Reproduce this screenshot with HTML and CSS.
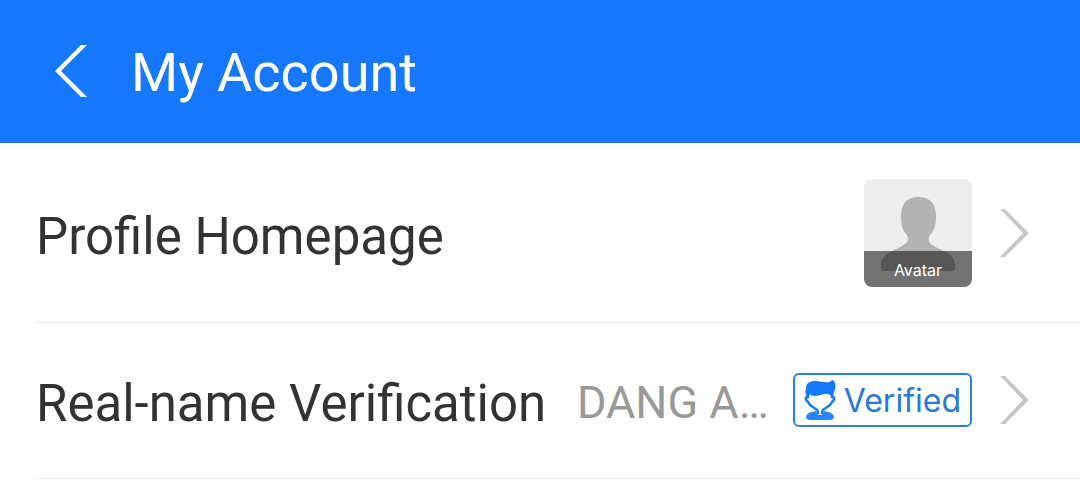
FILE: index.html
```html
<!DOCTYPE html>
<html lang="en">
<head>
    <meta charset="UTF-8">
    <meta name="viewport" content="width=device-width, initial-scale=1.0">
    <title>My Account</title>
    <link rel="stylesheet" href="styles.css">
</head>
<body>
    <header class="header">
        <button type="button" class="back" aria-label="Back">
            <svg width="34" height="52" viewBox="0 0 34 52">
                <path d="M26 0 0 26 26 52H32L6 26 32 0Z" fill="currentColor"/>
            </svg>
        </button>
        <h1>My Account</h1>
    </header>

    <main class="list">
        <a href="#profile" class="row row-profile">
            <span class="label">Profile Homepage</span>
            <span class="avatar">
                <svg width="108" height="108" viewBox="0 0 108 108" aria-hidden="true">
                    <path d="M54 18C66 18 72 25 72 37C72 45 71 50 67 55C64 59 64 62 67 65C69 67 74 69 80 72C88 76 91 80 91 87C91 91 90 92 87 92H21C18 92 17 91 17 87C17 80 20 76 28 72C34 69 39 67 41 65C45 62 45 59 42 55C38 50 37 45 37 37C37 25 43 18 54 18Z" fill="#b3b3b3"/>
                </svg>
                <span class="avatar-caption">Avatar</span>
            </span>
            <svg class="chevron" width="29" height="48" viewBox="0 0 29 48" aria-hidden="true">
                <path d="M0 0H5L29 24 5 48H0L23 24Z" fill="currentColor"/>
            </svg>
        </a>

        <a href="#verification" class="row row-verification">
            <span class="label">Real-name Verification</span>
            <span class="value">DANG A…</span>
            <span class="badge">
                <svg width="32" height="42" viewBox="0 0 32 42" aria-hidden="true">
                    <path d="M3 18C1 15 1 12 2 9C2 4 6 2 11 2C17 2 20 4 25 3C27 3 27 1 29 1C32 4 32 9 30 13L29 18C27 18 26 14 20 15C14 17 9 18 5 15Z" fill="#1677ff"/>
                    <path d="M4 15V18C1 18 1 20 4 23C6 28 10 28 13 31C14 32 14 34 14 35M28 15V18C31 18 31 20 28 23C26 28 22 28 19 31C18 32 18 34 18 35" fill="none" stroke="#1677ff" stroke-width="2.5"/>
                    <path d="M12 32C13 35 14 36 16 36C18 36 19 35 20 32C26 33 30 35 30 38C30 40 28 41 25 41H7C4 41 2 40 2 38C2 35 6 33 12 32Z" fill="#2b84ff"/>
                </svg>
                <span class="badge-text">Verified</span>
            </span>
            <svg class="chevron" width="29" height="48" viewBox="0 0 29 48" aria-hidden="true">
                <path d="M0 0H5L29 24 5 48H0L23 24Z" fill="currentColor"/>
            </svg>
        </a>
    </main>
</body>
</html>
```
FILE: styles.css
```css
* {
    box-sizing: border-box;
}

body {
    margin: 0;
    background: #fff;
    color: #333;
    font-family: Roboto, sans-serif;
}

svg {
    display: block;
    flex: none;
}

.header {
    display: flex;
    align-items: center;
    gap: 42px;
    padding: 37px 55px 38px;
    background: #1677ff;
    color: #fff;
}

.back {
    padding: 0;
    border: 0;
    background: none;
    color: inherit;
    cursor: pointer;
}

h1 {
    margin: 0;
    padding-top: 4px;
    font-size: 54px;
    font-weight: 400;
    line-height: 64px;
}

.list {
    padding-left: 36px;
}

.row {
    display: flex;
    align-items: center;
    padding-right: 51px;
    border-bottom: 1px solid #e8e8e8;
    color: inherit;
    text-decoration: none;
}

.row-profile {
    padding-top: 36px;
    padding-bottom: 35px;
}

.row-verification {
    padding-top: 46px;
    padding-bottom: 47px;
}

.label {
    flex: 1;
    padding-top: 8px;
    font-size: 51px;
    line-height: 54px;
    white-space: nowrap;
}

.value {
    padding-top: 6px;
    color: #999;
    font-size: 45px;
    line-height: 54px;
    white-space: nowrap;
}

.avatar {
    position: relative;
    overflow: hidden;
    border-radius: 8px;
    background: #eee;
}

.avatar-caption {
    position: absolute;
    left: 0;
    right: 0;
    bottom: 0;
    padding-top: 2px;
    background: rgba(0, 0, 0, 0.52);
    color: #fff;
    font-family: Inter, sans-serif;
    font-size: 16px;
    line-height: 34px;
    text-align: center;
}

.badge {
    display: flex;
    align-items: center;
    gap: 8px;
    margin-left: 24px;
    padding: 0 9px;
    border: 2px solid #2f80d8;
    border-radius: 6px;
}

.badge-text {
    padding-top: 2px;
    color: #2878dc;
    font-family: Inter, sans-serif;
    font-size: 32px;
    font-weight: 400;
    line-height: 48px;
}

.chevron {
    margin-left: 28px;
    color: #c8c8c8;
}
```
